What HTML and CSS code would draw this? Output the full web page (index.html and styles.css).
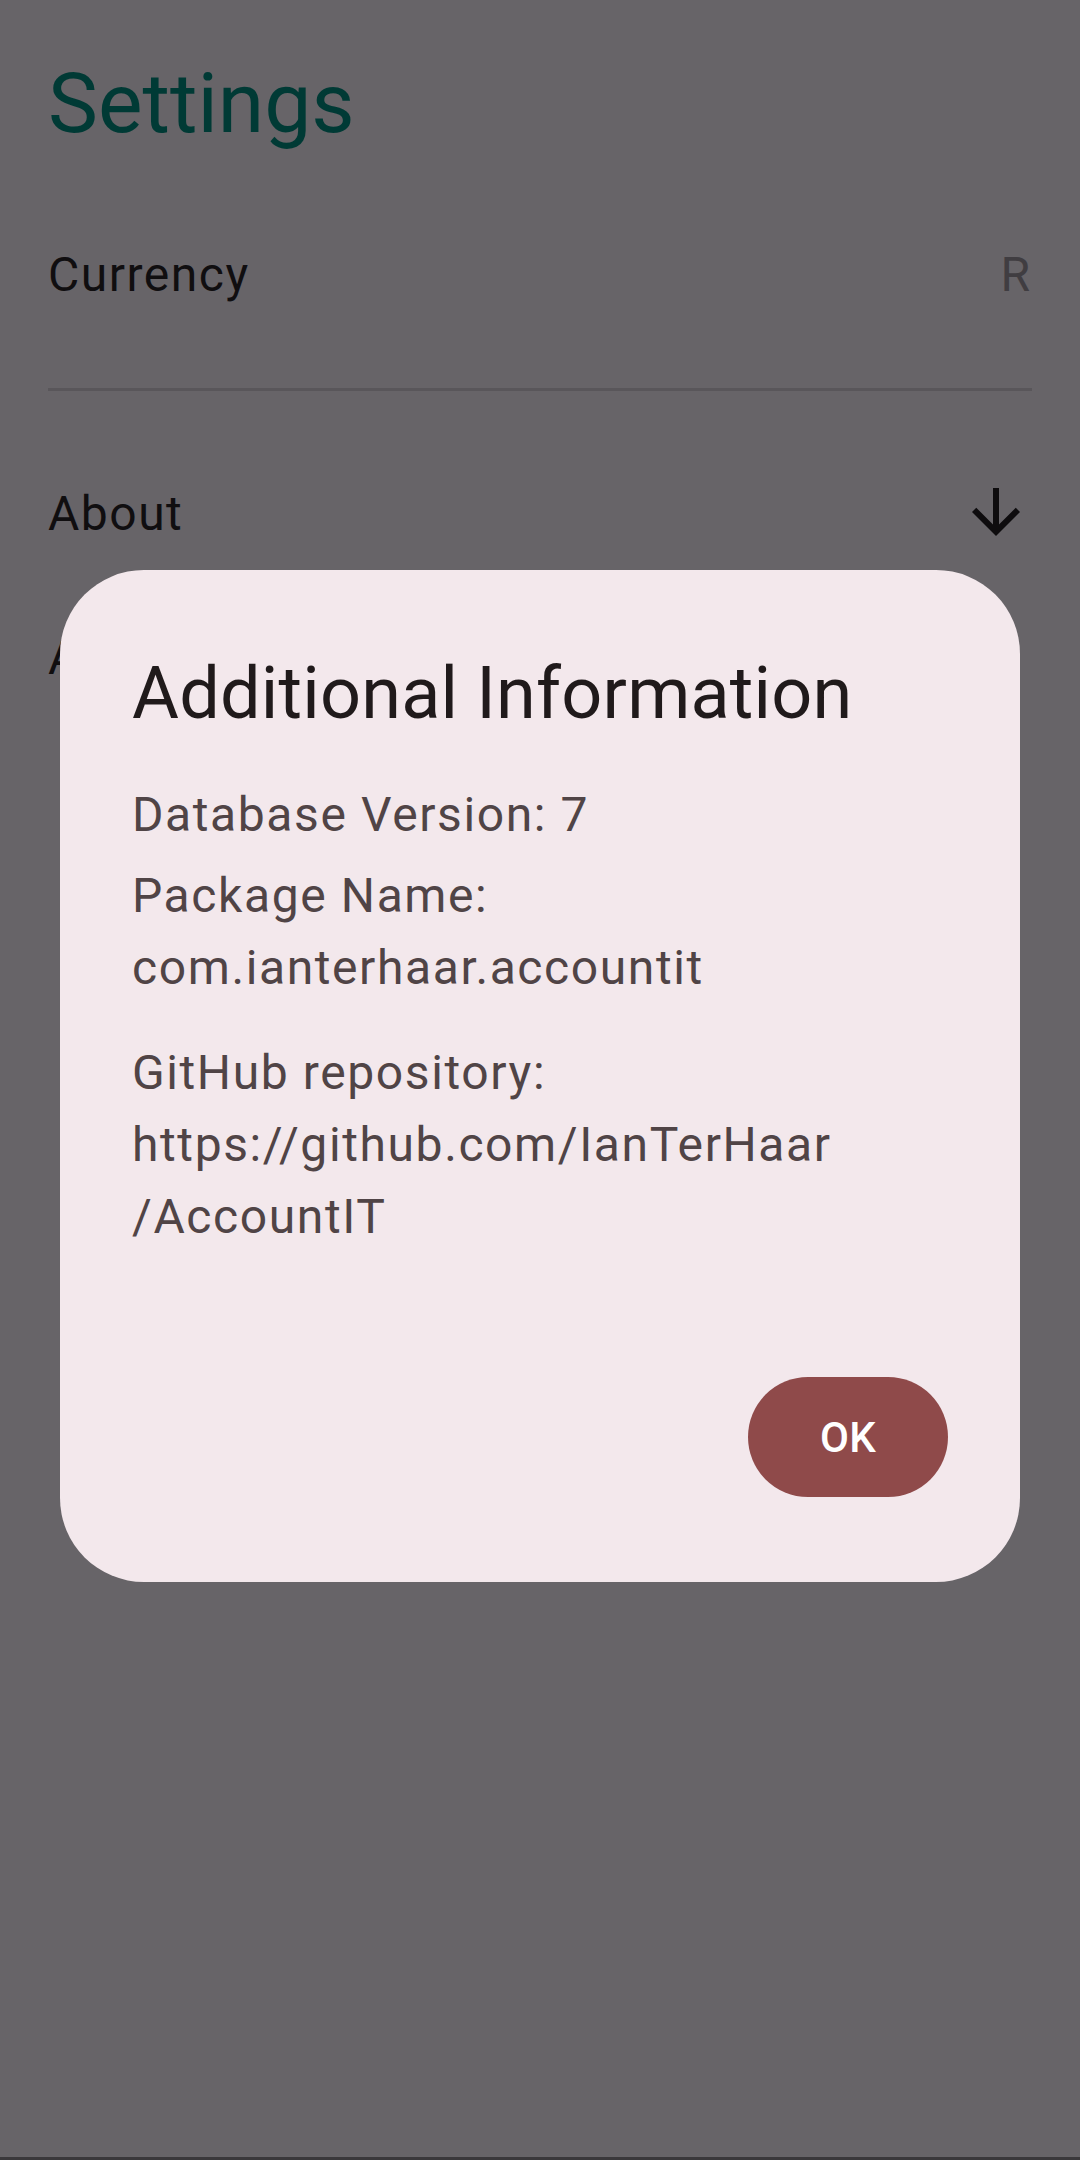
FILE: index.html
```html
<!DOCTYPE html>
<html lang="en">
<head>
<meta charset="utf-8">
<title>Settings</title>
<link rel="stylesheet" href="styles.css">
</head>
<body>
<div class="page">
  <main class="screen">
    <h1 class="title">Settings</h1>
    <div class="row row-currency">
      <span class="label">Currency</span>
      <span class="value">R</span>
    </div>
    <div class="divider"></div>
    <div class="row row-about">
      <span class="label">About</span>
      <svg class="icon" viewBox="0 0 24 24" width="72" height="72" aria-hidden="true"><path d="M20 12l-1.41-1.41L13 16.17V4h-2v12.17l-5.58-5.59L4 12l8 8 8-8z"/></svg>
    </div>
    <div class="row row-additional">
      <span class="label">Additional Information</span>
    </div>
  </main>
  <div class="navbar"></div>

  <div class="dialog" role="dialog">
    <h2 class="dialog-title">Additional Information</h2>
    <p class="dialog-text first">Database Version: 7</p>
    <p class="dialog-text pkg">Package Name:<br>com.ianterhaar.accountit</p>
    <p class="dialog-text repo">GitHub repository:<br>https://github.com/IanTerHaar<br>/AccountIT</p>
    <div class="actions">
      <button class="btn-ok">OK</button>
    </div>
  </div>
</div>
</body>
</html>
```

FILE: styles.css
```css
* { box-sizing: border-box; }

html, body {
  margin: 0;
  padding: 0;
}

body {
  width: 1080px;
  height: 2160px;
  background: #676468;
  font-family: Roboto, "Noto Sans", "Liberation Sans", sans-serif;
  overflow: hidden;
}

.page {
  position: relative;
  display: flex;
  flex-direction: column;
  width: 1080px;
  height: 2160px;
}

.screen {
  flex: 1;
  display: flex;
  flex-direction: column;
  padding: 54px 48px 0 48px;
}

.title {
  margin: 0;
  font-size: 84px;
  font-weight: 400;
  line-height: 100px;
  color: #003a35;
}

.row {
  display: flex;
  align-items: center;
  justify-content: space-between;
  height: 72px;
}

.label {
  font-size: 48px;
  line-height: 72px;
  color: #100e10;
  letter-spacing: 1.5px;
}

.value {
  font-size: 48px;
  line-height: 72px;
  color: #403d41;
  padding-right: 2px;
}

.row-currency { margin-top: 85px; }

.divider {
  margin-top: 77px;
  height: 3px;
  background: #59565a;
}

.row-about { margin-top: 87px; }

.icon {
  fill: #0e0c0e;
  margin-top: -4px;
}

.row-additional { margin-top: 72px; }

.navbar {
  height: 3px;
  background: #3a383b;
}

.dialog {
  position: absolute;
  left: 60px;
  top: 570px;
  width: 960px;
  display: flex;
  flex-direction: column;
  padding: 76px 72px 85px 72px;
  background: #f3e8ec;
  border-radius: 84px;
}

.dialog-title {
  margin: 0;
  font-size: 72px;
  font-weight: 400;
  line-height: 96px;
  color: #201a1b;
  letter-spacing: 0.2px;
}

.dialog-text {
  margin: 0;
  font-size: 48px;
  line-height: 72px;
  color: #504446;
  letter-spacing: 1.6px;
}

.dialog-text.first { margin-top: 37px; }
.dialog-text.pkg { margin-top: 9px; }
.dialog-text.repo { margin-top: 33px; }

.actions {
  display: flex;
  justify-content: flex-end;
  margin-top: 124px;
}

.btn-ok {
  height: 120px;
  padding: 0 72px;
  border: none;
  border-radius: 60px;
  background: #8f4a4a;
  color: #ffffff;
  font-family: Roboto, "Noto Sans", "Liberation Sans", sans-serif;
  font-size: 42px;
  font-weight: 500;
  letter-spacing: 0.3px;
}
```
